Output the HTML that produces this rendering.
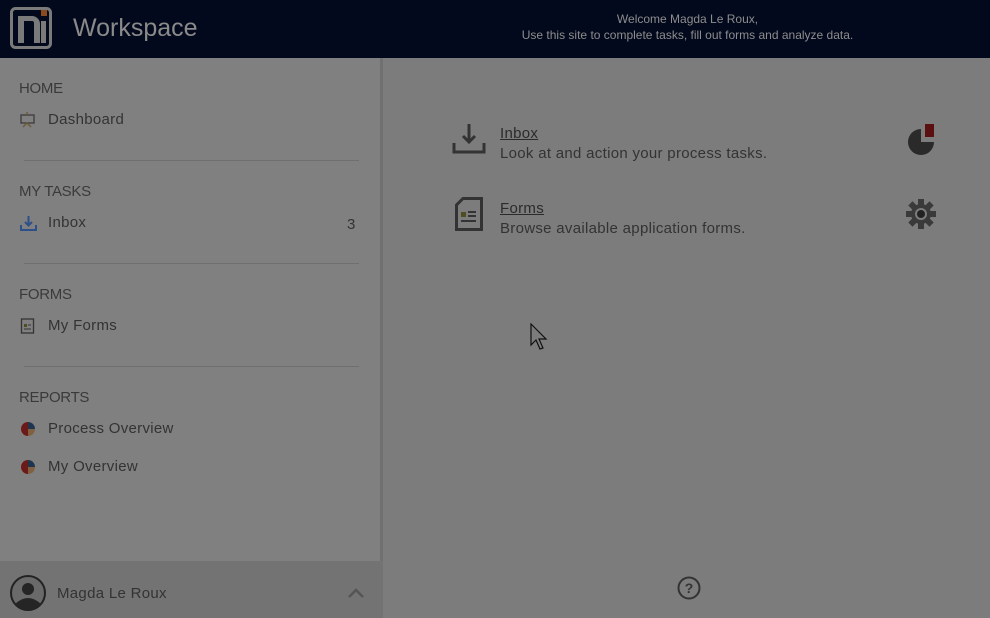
<!DOCTYPE html>
<html><head><style>
*{margin:0;padding:0;box-sizing:border-box}
body{width:990px;height:618px;overflow:hidden;background:#7c7c7c;font-family:"Liberation Sans",sans-serif;color:#2e2e2e;position:relative}
.hdr{position:absolute;left:0;top:0;width:990px;height:58px;background:#03091c}
.ws{position:absolute;left:73px;top:14px;font-size:25px;color:#8a8a8a}
.wel{position:absolute;left:480px;top:11px;width:415px;text-align:center;font-size:12px;line-height:16px;color:#8d8d8d}
.side{position:absolute;left:0;top:58px;width:383px;height:560px;background:#808080;border-right:3px solid #707070}
.sec{position:absolute;left:19px;font-size:15px;color:#3a3a3a;letter-spacing:-0.3px}
.it{position:absolute;left:48px;font-size:15px;color:#333;letter-spacing:0.3px}
.ic{position:absolute;left:20px}
.hr{position:absolute;left:24px;width:335px;height:1px;background:#6f6f6f}
.foot{position:absolute;left:0;top:561px;width:383px;height:57px;background:#737373}
.main h3{position:absolute;left:500px;font-size:15px;font-weight:normal;text-decoration:underline;color:#2b2b2b;letter-spacing:0.3px}
.main p{position:absolute;left:500px;font-size:15px;color:#333;letter-spacing:0.3px}
</style></head><body>
<div class="hdr">
<svg style="position:absolute;left:10px;top:7px" width="42" height="42"><rect x="1.5" y="1.5" width="39" height="39" rx="4" fill="none" stroke="#7a7a7a" stroke-width="3"/><path d="M8 36V9h14a8 8 0 0 1 8 8v19h-6V16a2 2 0 0 0-2-2h-8v22Z" fill="#7a7a7a"/><rect x="31" y="14" width="5" height="22" fill="#7a7a7a"/><rect x="31" y="3" width="6" height="6" fill="#8a4a1e"/></svg>
<div class="ws">Workspace</div>
<div class="wel">Welcome Magda Le Roux,<br>Use this site to complete tasks, fill out forms and analyze data.</div>
</div>
<div class="side">
<div class="sec" style="top:22px">HOME</div>
<svg class="ic" style="top:54px" width="16" height="16"><rect x="1" y="3" width="13" height="8" fill="none" stroke="#444" stroke-width="1.5"/><path d="M3 15 L7 11 L11 15 M7 0v3" stroke="#6b5a3a" stroke-width="1.5" fill="none"/></svg>
<div class="it" style="top:53px">Dashboard</div>
<div class="hr" style="top:102px"></div>
<div class="sec" style="top:125px">MY TASKS</div>
<svg class="ic" style="top:157px" width="17" height="16"><path d="M8.5 1v9M5 7l3.5 3.5L12 7" stroke="#2d4f8a" stroke-width="2" fill="none"/><path d="M1 10v5h15v-5" stroke="#2d4f8a" stroke-width="2" fill="none"/></svg>
<div class="it" style="top:156px">Inbox</div>
<div class="it" style="left:347px;top:158px">3</div>
<div class="hr" style="top:205px"></div>
<div class="sec" style="top:228px">FORMS</div>
<svg class="ic" style="top:260px" width="15" height="16"><rect x="1.5" y="1" width="12" height="14" fill="none" stroke="#333" stroke-width="1.3"/><rect x="4" y="6" width="3" height="3" fill="#4e4e20"/><path d="M8 7h3M4 11h7" stroke="#333"/></svg>
<div class="it" style="top:259px">My Forms</div>
<div class="hr" style="top:308px"></div>
<div class="sec" style="top:331px">REPORTS</div>
<svg class="ic" style="top:363px" width="16" height="16"><path d="M8 1A7 7 0 0 0 8 15Z" fill="#6b1a1a"/><path d="M8 1A7 7 0 0 1 15 8H8Z" fill="#1e3550"/><path d="M15 8A7 7 0 0 1 8 15V8Z" fill="#806040"/></svg>
<div class="it" style="top:362px">Process Overview</div>
<svg class="ic" style="top:401px" width="16" height="16"><path d="M8 1A7 7 0 0 0 8 15Z" fill="#6b1a1a"/><path d="M8 1A7 7 0 0 1 15 8H8Z" fill="#1e3550"/><path d="M15 8A7 7 0 0 1 8 15V8Z" fill="#806040"/></svg>
<div class="it" style="top:400px">My Overview</div>
</div>
<div class="foot">
<svg style="position:absolute;left:9px;top:13px" width="38" height="38"><circle cx="19" cy="19" r="17" fill="#6a6a6a" stroke="#222" stroke-width="2"/><circle cx="19" cy="15" r="6" fill="#252525"/><path d="M6 30 Q19 18 32 30 A17 17 0 0 1 6 30Z" fill="#252525"/></svg>
<div class="it" style="left:57px;top:24px">Magda Le Roux</div>
<svg style="position:absolute;left:348px;top:27px" width="16" height="10"><path d="M1 9L8 2l7 7" stroke="#555" stroke-width="2.5" fill="none"/></svg>
</div>
<div class="main">
<svg style="position:absolute;left:452px;top:123px" width="34" height="32"><path d="M17 1v18M11 13l6 6 6-6" stroke="#333" stroke-width="3" fill="none"/><path d="M2 20v9h30v-9" stroke="#333" stroke-width="3" fill="none"/></svg>
<h3 style="top:125px">Inbox</h3>
<p style="top:145px">Look at and action your process tasks.</p>
<svg style="position:absolute;left:906px;top:123px" width="30" height="32"><path d="M15 6A13 13 0 1 0 28 19H15Z" fill="#2a2a2a"/><rect x="19" y="1" width="9" height="13" fill="#5a1010"/></svg>
<svg style="position:absolute;left:455px;top:197px" width="28" height="34"><path d="M8 1.5H26.5V32.5H1.5V8Z" fill="none" stroke="#333" stroke-width="3"/><rect x="6" y="15" width="5" height="5" fill="#4e4e20"/><path d="M13 15h8M13 19h8M6 24h15" stroke="#333" stroke-width="2"/></svg>
<h3 style="top:200px">Forms</h3>
<p style="top:220px">Browse available application forms.</p>
<svg style="position:absolute;left:906px;top:198px" width="30" height="32"><g transform="translate(15 16)" fill="#3a3a3a"><circle r="10"/><rect x="-3" y="-15" width="6" height="30"/><rect x="-3" y="-15" width="6" height="30" transform="rotate(45)"/><rect x="-3" y="-15" width="6" height="30" transform="rotate(90)"/><rect x="-3" y="-15" width="6" height="30" transform="rotate(135)"/><circle r="6" fill="#7c7c7c"/><circle r="4" fill="#222"/></g></svg>
<svg style="position:absolute;left:677px;top:576px" width="24" height="24"><circle cx="12" cy="12" r="10.5" fill="none" stroke="#333" stroke-width="2"/><text x="12" y="17" font-size="14" text-anchor="middle" fill="#333" font-family="Liberation Sans" font-weight="bold">?</text></svg>
<svg style="position:absolute;left:530px;top:323px" width="20" height="28"><path d="M1 1v21l5-5 4 9 3-1-4-9h7Z" fill="#7c7c7c" stroke="#111" stroke-width="1.2"/></svg>
</div>
</body></html>
